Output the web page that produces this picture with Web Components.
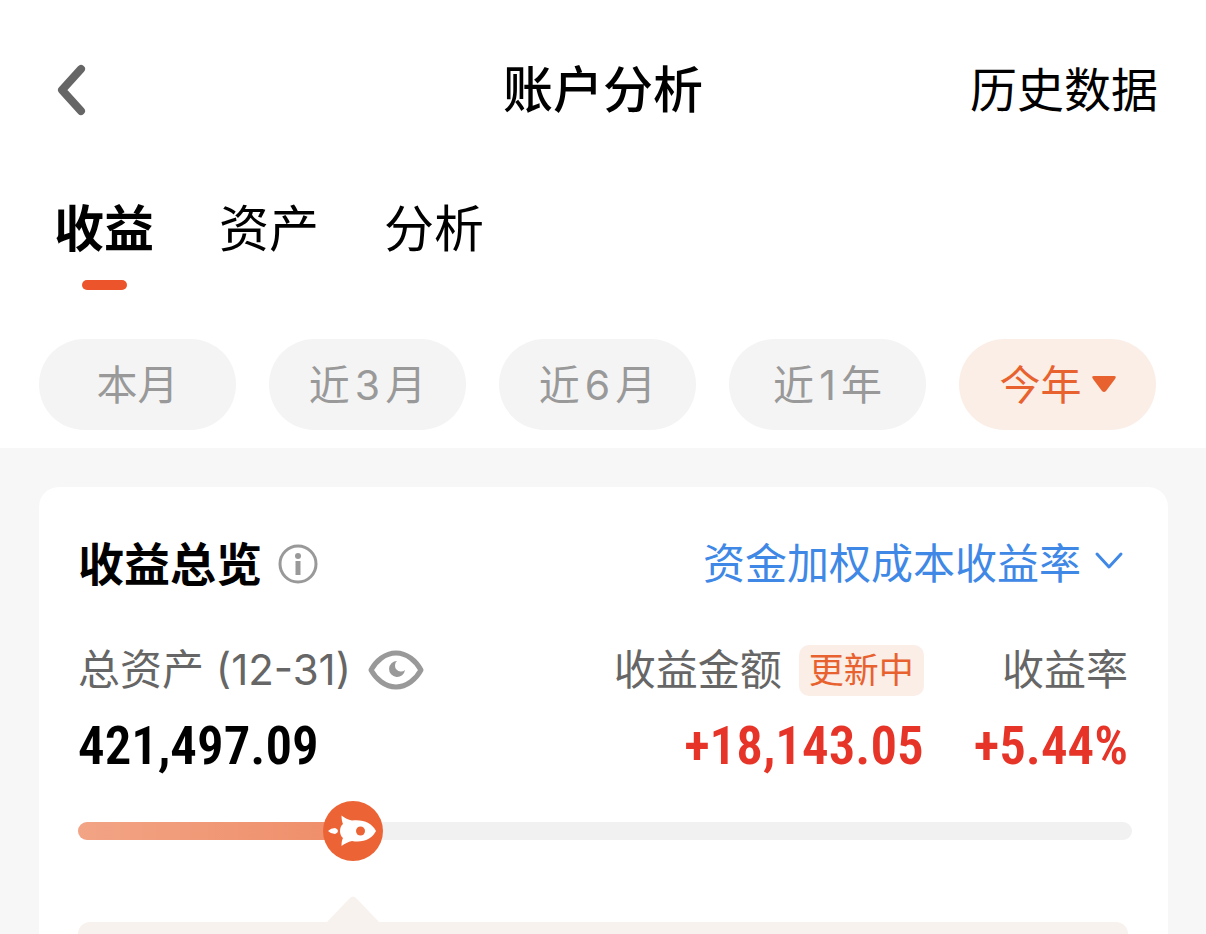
<!DOCTYPE html>
<html lang="zh-CN">
<head>
<meta charset="utf-8">
<meta name="viewport" content="width=device-width, initial-scale=1">
<title>账户分析</title>
<style>
  :root {
    --accent: #e8622f;
    --accent-soft: #fbeee7;
    --rise: #e63528;
    --link: #4088e6;
    --muted: #999;
    --label: #666;
  }
  * { box-sizing: border-box; }
  body {
    margin: 0;
    background: #f7f7f7;
    color: #000;
    font-family: Inter, "Noto Sans CJK SC", sans-serif;
    font-size: 42px;
    line-height: 60px;
  }
  account-page { height: 100vh; }
</style>
</head>
<body>
<account-page>
  <nav-header slot="top" heading="账户分析">历史数据</nav-header>
  <tab-bar slot="top">
    <tab-item active>收益</tab-item>
    <tab-item>资产</tab-item>
    <tab-item>分析</tab-item>
  </tab-bar>
  <period-filter slot="top">
    <period-chip>本月</period-chip>
    <period-chip>近3月</period-chip>
    <period-chip>近6月</period-chip>
    <period-chip>近1年</period-chip>
    <period-chip active>今年</period-chip>
  </period-filter>
  <overview-card heading="收益总览">
    <metric-item slot="metrics" value="421,497.09">
      总资产 (12-31)
      <eye-toggle slot="extra"></eye-toggle>
    </metric-item>
    <metric-item slot="metrics" value="+18,143.05" rise>
      收益金额
      <status-tag slot="extra">更新中</status-tag>
    </metric-item>
    <metric-item slot="metrics" value="+5.44%" rise>收益率</metric-item>
    <rocket-progress slot="progress" value="26.1"></rocket-progress>
  </overview-card>
</account-page>

<script>
// shared by all elements: fills the shadow root
class BaseElement extends HTMLElement {
  constructor() {
    super();
    this.attachShadow({ mode: 'open' });
  }

  connectedCallback() {
    this.shadowRoot.innerHTML = `
      <style>
        * { box-sizing: border-box; }
        button, select {
          margin: 0;
          padding: 0;
          border: 0;
          background: none;
          color: inherit;
          font: inherit;
          cursor: pointer;
        }
        svg { display: block; flex: none; }
      </style>
      ${this.template()}
    `;
  }
}

class AccountPage extends BaseElement {
  template() {
    return /*html*/ `
      <style>
        :host {
          display: flex;
          flex-direction: column;
          overflow: hidden;
        }
        header { background: #fff; padding-bottom: 18px; }
        main {
          flex: 1;
          display: flex;
          padding: 39px 38px 0 39px;
        }
      </style>
      <header><slot name="top"></slot></header>
      <main><slot></slot></main>
    `;
  }
}

class NavHeader extends BaseElement {
  template() {
    return /*html*/ `
      <style>
        :host {
          display: grid;
          grid-template-columns: 1fr auto 1fr;
          align-items: center;
          height: 180px;
          padding: 0 48px;
        }
        h1 { margin: 0; font-size: 50px; font-weight: 500; }
        .back { justify-self: start; padding: 0 8px; }
        .link { justify-self: end; font-size: 47px; }
      </style>
      <button class="back" aria-label="返回">
        <svg width="32" height="54" viewBox="0 0 32 54" fill="none" stroke="#666" stroke-width="8" stroke-linecap="round" stroke-linejoin="round">
          <path d="M25 6 6 27l19 21"/>
        </svg>
      </button>
      <h1>${this.getAttribute('heading')}</h1>
      <button class="link"><slot></slot></button>
    `;
  }
}

class TabBar extends BaseElement {
  template() {
    return /*html*/ `
      <style>
        :host {
          display: flex;
          gap: 65px;
          padding: 19px 54px 49px;
        }
      </style>
      <slot></slot>
    `;
  }
}

class TabItem extends BaseElement {
  template() {
    return /*html*/ `
      <style>
        :host { display: block; font-size: 50px; }
        button {
          display: flex;
          flex-direction: column;
          align-items: center;
          gap: 21px;
        }
        button::after {
          content: '';
          width: 45px;
          height: 10px;
          border-radius: 5px;
        }
        :host([active]) button { font-weight: 700; }
        :host([active]) button::after { background: #ec552b; }
      </style>
      <button><slot></slot></button>
    `;
  }
}

class PeriodFilter extends BaseElement {
  template() {
    return /*html*/ `
      <style>
        :host {
          display: grid;
          grid-template-columns: repeat(5, 1fr);
          gap: 33px;
          padding: 0 50px 0 39px;
        }
      </style>
      <slot></slot>
    `;
  }
}

class PeriodChip extends BaseElement {
  template() {
    const arrow = /*html*/ `
      <svg width="24" height="17" viewBox="0 0 24 17" fill="currentColor">
        <path d="M2 0h20q3 0 1 3L14 15q-2 2-4 0L1 3Q-1 0 2 0z"/>
      </svg>
    `;
    return /*html*/ `
      <style>
        :host { display: block; color: var(--muted); font-size: 41px; }
        button {
          display: flex;
          align-items: center;
          justify-content: center;
          gap: 10px;
          width: 100%;
          height: 91px;
          border-radius: 46px;
          background: #f4f4f4;
          text-autospace: normal;
        }
        :host([active]) { color: var(--accent); }
        :host([active]) button { background: var(--accent-soft); }
      </style>
      <button><span><slot></slot></span>${this.hasAttribute('active') ? arrow : ''}</button>
    `;
  }
}

class OverviewCard extends BaseElement {
  template() {
    return /*html*/ `
      <style>
        :host {
          flex: 1;
          display: flex;
          flex-direction: column;
          padding: 47px 40px 0 39px;
          border-radius: 20px 20px 0 0;
          background: #fff;
        }
        .head, .title, .method { display: flex; align-items: center; }
        .head { justify-content: space-between; }
        .title { gap: 16px; }
        .method { gap: 12px; padding-right: 4px; color: var(--link); }
        h2 { margin: 0; font-size: 46px; font-weight: 700; }
        select { appearance: none; }
        .metrics {
          display: flex;
          gap: 50px;
          margin: 50px 0 25px;
        }
        .callout {
          flex: 1;
          display: flex;
          flex-direction: column;
          margin-top: 35px;
        }
        .callout svg { margin-left: 249px; }
        .detail {
          flex: 1;
          border-radius: 16px 16px 0 0;
          background: #f8f2ee;
        }
      </style>
      <div class="head">
        <div class="title">
          <h2>${this.getAttribute('heading')}</h2>
          <button aria-label="说明">
            <svg width="40" height="40" viewBox="0 0 40 40">
              <circle cx="20" cy="20" r="18" fill="none" stroke="#999" stroke-width="3"/>
              <circle cx="20" cy="12" r="3" fill="#999"/>
              <path d="M17.500 17h5v14h-5z" fill="#999"/>
            </svg>
          </button>
        </div>
        <label class="method">
          <select aria-label="收益率算法">
            <option>资金加权成本收益率</option>
          </select>
          <svg width="30" height="26" viewBox="0 0 30 26" fill="none" stroke="currentColor" stroke-width="3" stroke-linecap="round" stroke-linejoin="round">
            <path d="M3 3l12 13L27 3"/>
          </svg>
        </label>
      </div>
      <div class="metrics"><slot name="metrics"></slot></div>
      <slot name="progress"></slot>
      <div class="callout">
        <svg width="52" height="26" viewBox="0 0 52 26" fill="#f8f2ee">
          <path d="M0 26 23 2q3-3 6 0l23 24z"/>
        </svg>
        <div class="detail"></div>
      </div>
    `;
  }
}

class MetricItem extends BaseElement {
  template() {
    return /*html*/ `
      <style>
        :host { display: block; text-align: right; }
        :host(:first-child) { flex: 1; text-align: left; }
        :host([rise]) { --value-color: var(--rise); }
        .label {
          display: flex;
          align-items: center;
          justify-content: flex-end;
          gap: 17px;
          height: 52px;
          color: var(--label);
          white-space: nowrap;
        }
        :host(:first-child) .label { justify-content: flex-start; }
        .value {
          margin-top: 20px;
          color: var(--value-color, #000);
          font-family: "Roboto Condensed", Roboto, sans-serif;
          font-size: 53px;
          font-weight: 600;
        }
      </style>
      <div class="label"><span><slot></slot></span><slot name="extra"></slot></div>
      <div class="value">${this.getAttribute('value')}</div>
    `;
  }
}

class StatusTag extends BaseElement {
  template() {
    return /*html*/ `
      <style>
        :host {
          display: block;
          padding: 0 10px;
          border-radius: 10px;
          background: var(--accent-soft);
          color: var(--accent);
          font-size: 35px;
          line-height: 51px;
        }
      </style>
      <slot></slot>
    `;
  }
}

class EyeToggle extends BaseElement {
  template() {
    return /*html*/ `
      <style>
        :host { display: flex; }
      </style>
      <button aria-label="隐藏金额">
        <svg width="56" height="42" viewBox="0 0 56 42">
          <path d="M3 21C8 12 17 4 28 4S48 12 53 21C48 30 39 38 28 38S8 30 3 21z" fill="none" stroke="#999" stroke-width="5" stroke-linejoin="round"/>
          <path d="M29 12a8 8 0 1 0 8 9 5 5 0 1 1-8-9z" fill="#999"/>
        </svg>
      </button>
    `;
  }
}

class RocketProgress extends BaseElement {
  template() {
    const value = this.getAttribute('value');
    return /*html*/ `
      <style>
        :host {
          position: relative;
          display: flex;
          align-items: center;
          height: 60px;
          margin-right: -4px;
        }
        progress {
          appearance: none;
          width: 100%;
          height: 18px;
          border: 0;
          border-radius: 9px;
          background: #f1f1f1;
          overflow: hidden;
        }
        progress::-webkit-progress-bar { background: #f1f1f1; }
        progress::-webkit-progress-value { background: linear-gradient(90deg, #f2a485, #ef8d68); }
        /* the rocket rides on the end of the filled part */
        svg {
          position: absolute;
          left: ${value}%;
          transform: translateX(-50%);
        }
      </style>
      <progress max="100" value="${value}" aria-label="收益进度"></progress>
      <svg width="60" height="60" viewBox="0 0 60 60">
        <circle cx="30" cy="30" r="30" fill="#ec6435"/>
        <path d="M18.500 14.500C22 17 25 19 29 19.500 40 18 49 22 53 30 49 38 40 42 29 40 25 41 22 42.500 18.500 45 18.500 41 19 39 20 37 16 34 16 26 20 23 19 21 18.500 18 18.500 14.500z" fill="#fff"/>
        <path d="M5 30q3-3 7-3 3 1 3 3t-3 3q-4 0-7-3z" fill="#fff"/>
        <circle cx="37.500" cy="30" r="4.500" fill="#ec6435"/>
      </svg>
    `;
  }
}

customElements.define('account-page', AccountPage);
customElements.define('nav-header', NavHeader);
customElements.define('tab-bar', TabBar);
customElements.define('tab-item', TabItem);
customElements.define('period-filter', PeriodFilter);
customElements.define('period-chip', PeriodChip);
customElements.define('overview-card', OverviewCard);
customElements.define('metric-item', MetricItem);
customElements.define('status-tag', StatusTag);
customElements.define('eye-toggle', EyeToggle);
customElements.define('rocket-progress', RocketProgress);
</script>
</body>
</html>
